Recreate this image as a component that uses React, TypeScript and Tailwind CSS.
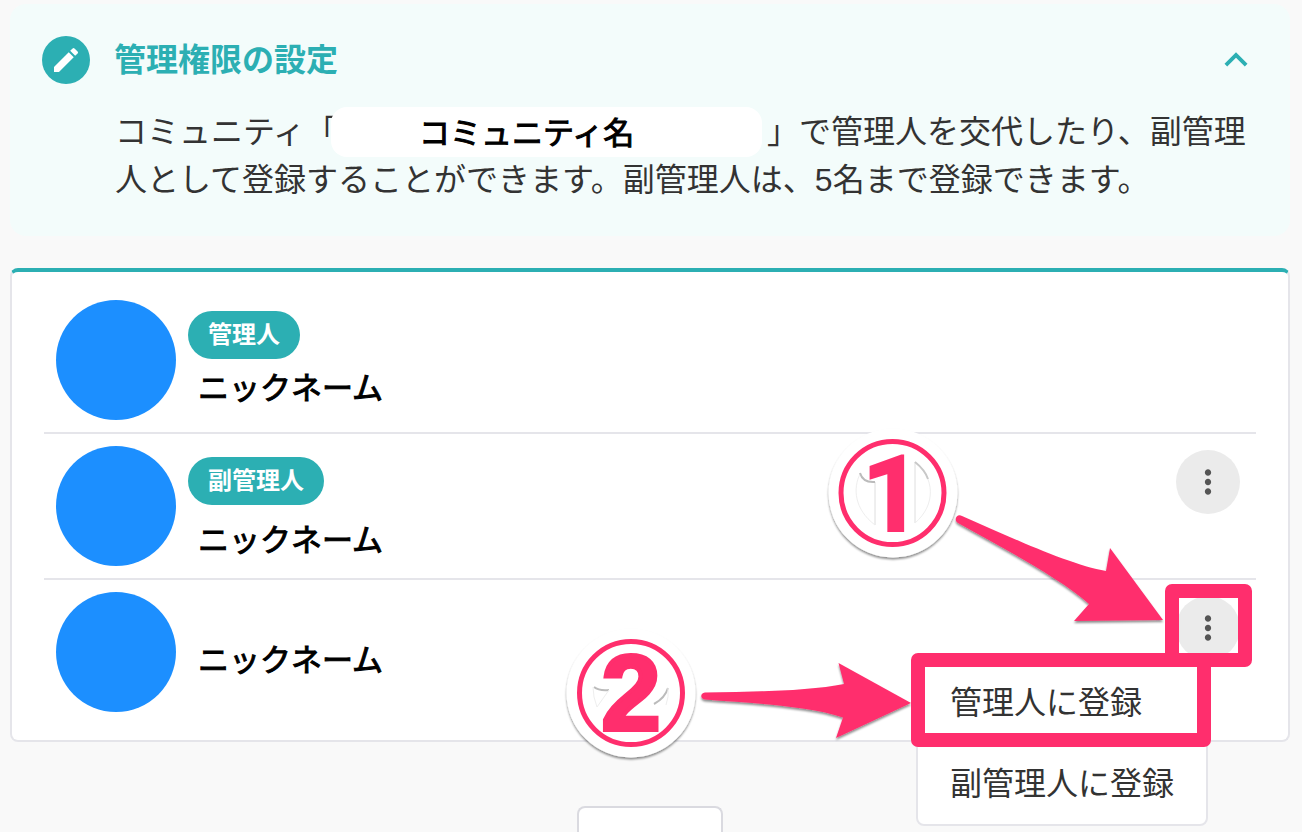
import React from "react";
import { MdEdit, MdKeyboardArrowUp, MdMoreVert } from "react-icons/md";

interface Member {
  id: number;
  name: string;
  role?: string;
  nameClass: string;
  menu?: "closed" | "open";
}

const members: Member[] = [
  { id: 1, name: "ニックネーム", role: "管理人", nameClass: "mt-[6px]" },
  { id: 2, name: "ニックネーム", role: "副管理人", nameClass: "mt-3", menu: "closed" },
  { id: 3, name: "ニックネーム", nameClass: "mt-[34px]", menu: "open" },
];

const SettingHeader = () => {
  return (
    <section className="rounded-2xl bg-[#f3fcfb] p-8">
      <div className="flex items-center gap-6">
        <span className="flex size-12 shrink-0 items-center justify-center rounded-full bg-[#2cafb3] text-white">
          <MdEdit className="size-8" />
        </span>
        <h1 className="flex-1 text-[32px] leading-[48px] font-bold text-[#2cafb3]">
          管理権限の設定
        </h1>
        <button
          type="button"
          aria-label="閉じる"
          className="flex h-12 w-11 cursor-pointer items-center justify-center text-[#2cafb3]"
        >
          <MdKeyboardArrowUp className="size-[46px] shrink-0" />
        </button>
      </div>
      <p className="mt-6 pl-[73px] text-[32px] leading-[48px] text-[#333]">
        コミュニティ「
        <span className="-mt-[7px] mr-[5px] -mb-px -ml-[6px] inline-flex h-[50px] w-[431px] items-center justify-center rounded-2xl bg-white pt-1 pr-10 align-middle text-[31px] leading-8 text-black [-webkit-text-stroke:1px_#000]">
          コミュニティ名
        </span>
        」で管理人を交代したり、副管理人として登録することができます。副管理人は、5名まで登録できます。
      </p>
    </section>
  );
};

const MemberMenu = () => {
  return (
    <div className="absolute top-16 right-8 z-10 flex flex-col rounded-lg border-2 border-[#e5e5ea] bg-white text-[32px] whitespace-nowrap text-[#333]">
      <button type="button" className="h-[81px] cursor-pointer px-8 text-left">
        管理人に登録
      </button>
      <button type="button" className="h-[81px] cursor-pointer px-8 text-left">
        副管理人に登録
      </button>
    </div>
  );
};

const MemberRow = ({ name, role, nameClass, menu }: Member) => {
  return (
    <li className="flex h-[146px] items-start border-b-2 border-[#e5e5ea] pr-4 pl-3 last:h-36 last:border-b-0">
      <div className="mt-3 size-[120px] shrink-0 rounded-full bg-[#1c8fff]" />
      <div className="ml-3 flex flex-1 flex-col items-start pt-[23px]">
        {role && (
          <span className="flex h-12 items-center rounded-full bg-[#2cafb3] px-5 text-2xl font-bold text-white">
            {role}
          </span>
        )}
        <span
          className={`${nameClass} ml-[10px] text-[31px] leading-[48px] text-black [-webkit-text-stroke:1px_#000]`}
        >
          {name}
        </span>
      </div>
      {menu && (
        <div className="relative mt-4">
          <button
            type="button"
            aria-label="メニュー"
            className="flex size-16 cursor-pointer items-center justify-center rounded-full bg-[#ebebeb] text-[#555]"
          >
            <MdMoreVert className="size-[38px]" />
          </button>
          {menu === "open" && <MemberMenu />}
        </div>
      )}
    </li>
  );
};

// Numbered steps, arrows and frames drawn over the member list
const Guide = () => {
  return (
    <svg
      className="pointer-events-none absolute top-[420px] right-0 z-20 h-[412px] w-[742px]"
      viewBox="560 420 742 412"
      fill="none"
    >
      <defs>
        <filter id="shadow" x="-20%" y="-20%" width="140%" height="140%">
          <feDropShadow dx="0" dy="2" stdDeviation="1.2" floodColor="#000" floodOpacity="0.45" />
        </filter>
      </defs>

      <circle cx="893" cy="493" r="64.5" fill="#fff" filter="url(#shadow)" />
      <path d="M875 525V482M915 462V523" stroke="#dedede" />
      <path d="M860 474C853 488 854 509 875 525M915 462C935 478 936 505 915 523" stroke="#eee" />
      <path d="M860 473Q863 483 875 482" stroke="#bbb" strokeWidth="2" />
      <path d="M915 462Q925 470 928 479" stroke="#c8c8c8" strokeWidth="2" />
      <circle cx="892.5" cy="493" r="51.5" stroke="#ff2e6d" strokeWidth="5" />
      <text
        x="892"
        y="531"
        textAnchor="middle"
        fill="#ff2e6d"
        stroke="#ff2e6d"
        strokeWidth="2"
        className="font-['Roboto'] text-[105px] font-bold"
      >
        1
      </text>

      <circle cx="631" cy="693" r="64.5" fill="#fff" filter="url(#shadow)" />
      <path d="M594 687Q599 691 609 690M654 704Q665 698 668 688" stroke="#bbb" strokeWidth="2" />
      <path d="M593 687Q593 697 597 707L609 690M668 688Q669 697 666 705" stroke="#eee" />
      <circle cx="631" cy="693" r="51.5" stroke="#ff2e6d" strokeWidth="5" />
      <text
        x="631"
        y="730"
        textAnchor="middle"
        fill="#ff2e6d"
        stroke="#ff2e6d"
        strokeWidth="4"
        className="font-['Liberation_Sans'] text-[107px] font-bold"
      >
        2
      </text>

      <g fill="#ff2e6d" filter="url(#shadow)">
        <path d="M962 516C1010 537 1070 565 1106 571L1110 548L1163 620L1074 621L1089 604C1060 578 1003 548 958 523C953 520 957 513 962 516Z" />
        <path d="M705 692.5C750 692 810 691 844 684L838.500 663L911 703L836 738L843 717.500C810 706 750 703 705 699.500C700 699 700 693 705 692.500Z" />
      </g>

      <g stroke="#ff2e6d" strokeWidth="14" strokeLinejoin="round">
        <rect x="1172" y="591" width="73" height="69" />
        <rect x="918" y="660" width="286" height="80" />
      </g>
    </svg>
  );
};

const App = () => {
  return (
    <main className="relative min-h-screen overflow-hidden bg-[#f9f9f9] pt-1 pr-3 pl-[10px] font-['Liberation_Sans','Noto_Sans_CJK_JP',sans-serif]">
      <SettingHeader />
      <ul className="mt-8 rounded-lg border-2 border-t-4 border-[#e5e5ea] border-t-[#2cafb3] bg-white px-8 py-4">
        {members.map((member) => (
          <MemberRow key={member.id} {...member} />
        ))}
      </ul>
      <button
        type="button"
        aria-label="戻る"
        className="mx-auto mt-16 block h-[26px] w-[146px] cursor-pointer rounded-t-lg border-2 border-b-0 border-[#dadae0] bg-white"
      />
      <Guide />
    </main>
  );
};

export default App;
